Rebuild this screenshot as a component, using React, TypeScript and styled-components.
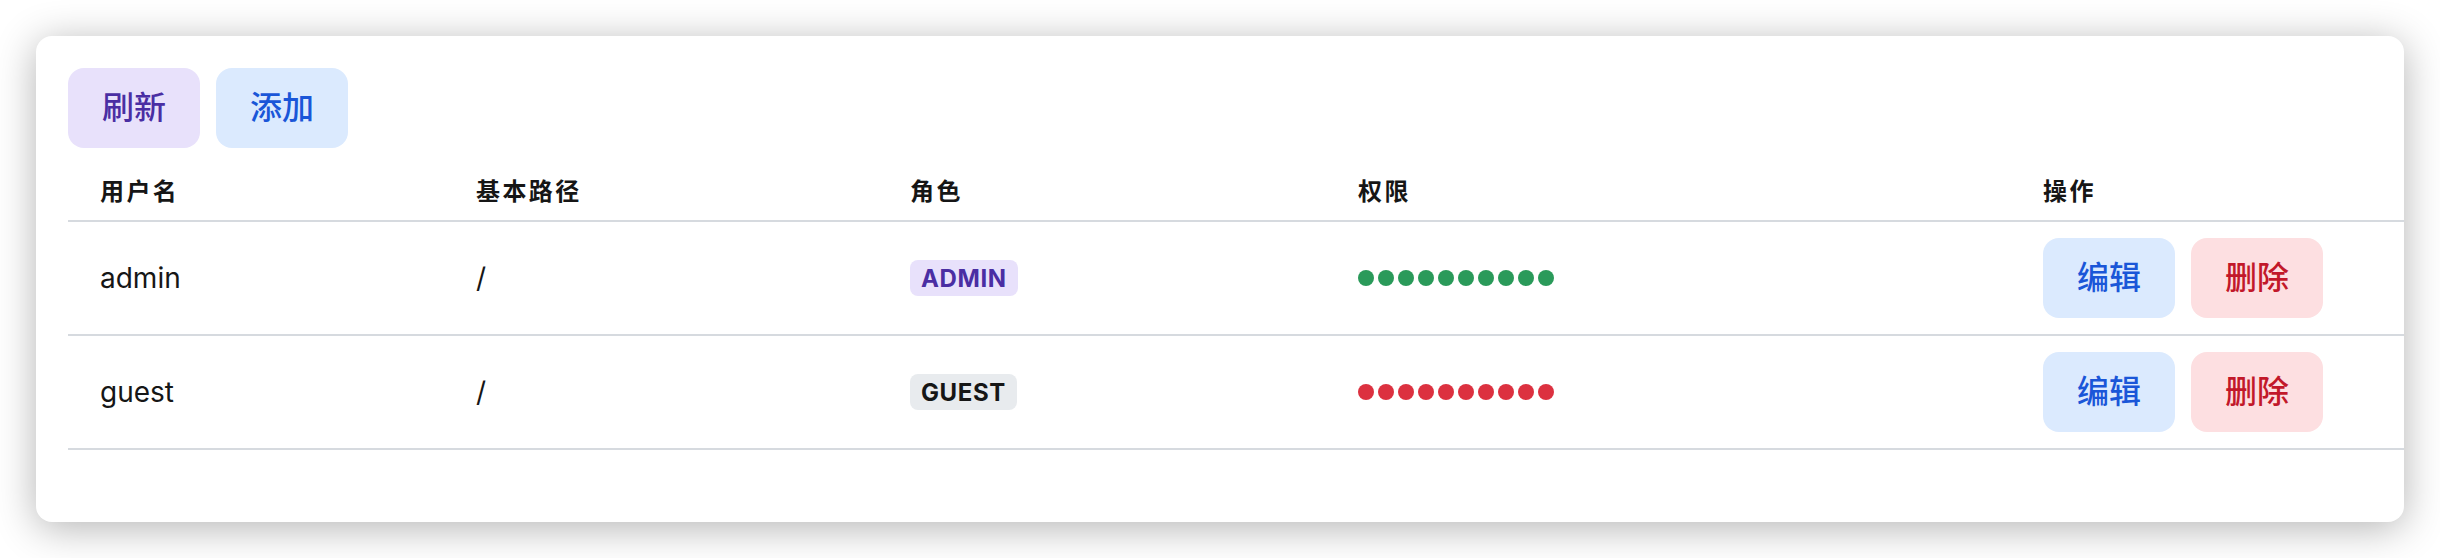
import React from "react";
import styled, { createGlobalStyle } from "styled-components";

const GlobalStyle = createGlobalStyle`
  html, body {
    margin: 0;
    padding: 0;
    background: #ffffff;
    font-family: "Inter", "Noto Sans CJK SC", sans-serif;
    color: #161616;
  }
  * { box-sizing: border-box; }
`;

const Page = styled.div`
  padding: 36px;
`;

const Card = styled.div`
  background: #ffffff;
  border-radius: 16px;
  box-shadow: 0 6px 40px rgba(0, 0, 0, 0.3);
  padding: 32px 0 72px 32px;
`;

const Toolbar = styled.div`
  display: flex;
  gap: 16px;
  margin-bottom: 16px;
`;

type Tone = "violet" | "blue" | "red";

const tones: Record<Tone, { bg: string; fg: string }> = {
  violet: { bg: "#e8e1fb", fg: "#4a2ea3" },
  blue: { bg: "#dbeafe", fg: "#1a56d8" },
  red: { bg: "#fddfe1", fg: "#c2182a" },
};

const Button = styled.button<{ $tone: Tone }>`
  height: 80px;
  width: 132px;
  border: none;
  border-radius: 16px;
  font-family: "Inter", "Noto Sans CJK SC", sans-serif;
  font-size: 32px;
  font-weight: 500;
  line-height: 1;
  cursor: pointer;
  background: ${(p) => tones[p.$tone].bg};
  color: ${(p) => tones[p.$tone].fg};
  display: inline-flex;
  align-items: center;
  justify-content: center;
  padding: 0;
`;

const Table = styled.div`
  display: grid;
  grid-template-columns: 376px 434px 448px 685px 1fr;
`;

const HeadCell = styled.div`
  padding: 10px 32px;
  font-size: 24px;
  line-height: 36px;
  font-weight: 700;
  letter-spacing: 2.4px;
  color: #161616;
  border-bottom: 2px solid #d6dadf;
`;

const Cell = styled.div`
  padding: 16px 32px;
  min-height: 114px;
  display: flex;
  align-items: center;
  gap: 16px;
  font-size: 28px;
  color: #161616;
  border-bottom: 2px solid #d6dadf;
`;

const Badge = styled.span<{ $role: "admin" | "guest" }>`
  display: inline-flex;
  align-items: center;
  height: 36px;
  padding: 0 11px 0 11px;
  border-radius: 8px;
  font-size: 24px;
  font-weight: 700;
  letter-spacing: 0.6px;
  background: ${(p) => (p.$role === "admin" ? "#e8e1fb" : "#e8ebee")};
  color: ${(p) => (p.$role === "admin" ? "#4a2ea3" : "#161616")};
`;

const Dots = styled.div`
  display: flex;
  gap: 4px;
`;

const Dot = styled.span<{ $on: boolean }>`
  width: 16px;
  height: 16px;
  border-radius: 50%;
  background: ${(p) => (p.$on ? "#2a9a5a" : "#dc3140")};
`;

const users = [
  { name: "admin", path: "/", role: "admin" as const, perms: Array(10).fill(true) },
  { name: "guest", path: "/", role: "guest" as const, perms: Array(10).fill(false) },
];

export default function App() {
  return (
    <>
      <GlobalStyle />
      <Page>
        <Card>
          <Toolbar>
            <Button $tone="violet">刷新</Button>
            <Button $tone="blue">添加</Button>
          </Toolbar>
          <Table>
            <HeadCell>用户名</HeadCell>
            <HeadCell>基本路径</HeadCell>
            <HeadCell>角色</HeadCell>
            <HeadCell>权限</HeadCell>
            <HeadCell>操作</HeadCell>
            {users.map((u) => (
              <React.Fragment key={u.name}>
                <Cell>{u.name}</Cell>
                <Cell>{u.path}</Cell>
                <Cell>
                  <Badge $role={u.role}>{u.role.toUpperCase()}</Badge>
                </Cell>
                <Cell>
                  <Dots>
                    {u.perms.map((on, i) => (
                      <Dot key={i} $on={on} />
                    ))}
                  </Dots>
                </Cell>
                <Cell>
                  <Button $tone="blue">编辑</Button>
                  <Button $tone="red">删除</Button>
                </Cell>
              </React.Fragment>
            ))}
          </Table>
        </Card>
      </Page>
    </>
  );
}
